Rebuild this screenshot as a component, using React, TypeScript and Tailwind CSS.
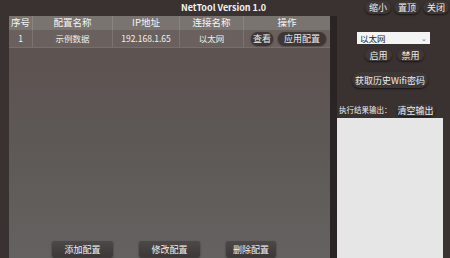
import React from 'react';

const font = { fontFamily: '"Noto Sans CJK SC", "Noto Sans", sans-serif' };

const cols = [
  { title: '序号', w: 'w-[24px]' },
  { title: '配置名称', w: 'w-[80px]' },
  { title: 'IP地址', w: 'w-[67px]' },
  { title: '连接名称', w: 'w-[64px]' },
  { title: '操作', w: 'flex-1' },
];

function Pill({ children, className = '' }: { children: React.ReactNode; className?: string }) {
  return (
    <button
      className={`flex items-center justify-center rounded-full bg-[#3d3735] text-[9px] leading-none text-[#eeeeee] shadow-[0_1px_2px_rgba(0,0,0,0.6)] ${className}`}
    >
      {children}
    </button>
  );
}

function BottomButton({ label, w }: { label: string; w: string }) {
  return (
    <button
      className={`flex h-[16px] ${w} items-center justify-center rounded-[2px] bg-gradient-to-b from-[#4d4948] to-[#3b3837] text-[9px] leading-none text-[#f0f0f0] shadow-[0_1px_2px_rgba(0,0,0,0.5)]`}
    >
      {label}
    </button>
  );
}

export default function App() {
  return (
    <div className="flex h-[258px] w-[450px] flex-col overflow-hidden bg-[#3a3230]" style={font}>
      {/* title bar */}
      <div className="relative flex h-[16px] items-start">
        <div className="absolute left-[181px] top-[3px] text-[9px] font-semibold leading-none text-[#f2f2f2]">
          NetTool Version 1.0
        </div>
        <div className="ml-auto flex gap-[3px] pr-[1px] pt-[1px]">
          <Pill className="h-[13px] w-[26px]">缩小</Pill>
          <Pill className="h-[13px] w-[26px]">置顶</Pill>
          <Pill className="h-[13px] w-[26px]">关闭</Pill>
        </div>
      </div>

      <div className="flex flex-1">
        {/* table panel */}
        <div className="ml-[9px] flex w-[321px] flex-col bg-gradient-to-b from-[#5d514e] via-[#5d5856] to-[#646260]">
          <div className="flex h-[14px] bg-[#7a7470] text-[9.5px] leading-none text-[#f5f5f5]">
            {cols.map((c) => (
              <div key={c.title} className={`${c.w} flex items-center justify-center border-r border-[#8a8480] last:border-r-0`}>
                {c.title}
              </div>
            ))}
          </div>
          <div className="flex h-[18px] border-b border-[#7a6e6a] bg-[#6a605d] text-[8.5px] leading-none text-[#f0f0f0]">
            <div className="flex w-[24px] items-center justify-center border-r border-[#7d7370]">1</div>
            <div className="flex w-[80px] items-center justify-center border-r border-[#7d7370]">示例数据</div>
            <div className="flex w-[67px] items-center justify-center border-r border-[#7d7370]">192.168.1.65</div>
            <div className="flex w-[64px] items-center justify-center border-r border-[#7d7370]">以太网</div>
            <div className="flex flex-1 items-center gap-[5px] pl-[7px]">
              <Pill className="h-[13px] w-[22px] text-[8.5px]">查看</Pill>
              <Pill className="h-[13px] w-[48px] text-[8.5px]">应用配置</Pill>
            </div>
          </div>
          <div className="flex-1" />
          <div className="flex gap-[26px] pb-[1px] pl-[43px]">
            <BottomButton label="添加配置" w="w-[61px]" />
            <BottomButton label="修改配置" w="w-[61px]" />
            <BottomButton label="删除配置" w="w-[50px]" />
          </div>
        </div>

        {/* separator */}
        <div className="w-[7px] bg-[#2a2524]" />

        {/* right panel */}
        <div className="flex w-[106px] flex-col">
          <div className="ml-[20px] mt-[16px] flex h-[12px] w-[73px] items-center justify-between bg-[#f4f4f4] px-[3px] text-[8.5px] leading-none text-[#222]">
            <span>以太网</span>
            <span className="text-[7px] text-[#666]">⌄</span>
          </div>
          <div className="ml-[28px] mt-[5px] flex gap-[5px]">
            <Pill className="h-[12px] w-[27px]">启用</Pill>
            <Pill className="h-[12px] w-[27px]">禁用</Pill>
          </div>
          <Pill className="ml-[15px] mt-[11px] h-[16px] w-[76px]">获取历史Wifi密码</Pill>
          <div className="mt-[16px] flex items-center">
            <span className="ml-[2px] text-[7.5px] leading-none text-[#eeeeee]">执行结果输出：</span>
            <Pill className="ml-[5px] h-[12px] w-[38px] text-[8.5px]">清空输出</Pill>
          </div>
          <div className="mt-[2px] flex-1 bg-[#e6e6e6]" />
        </div>
      </div>
    </div>
  );
}
